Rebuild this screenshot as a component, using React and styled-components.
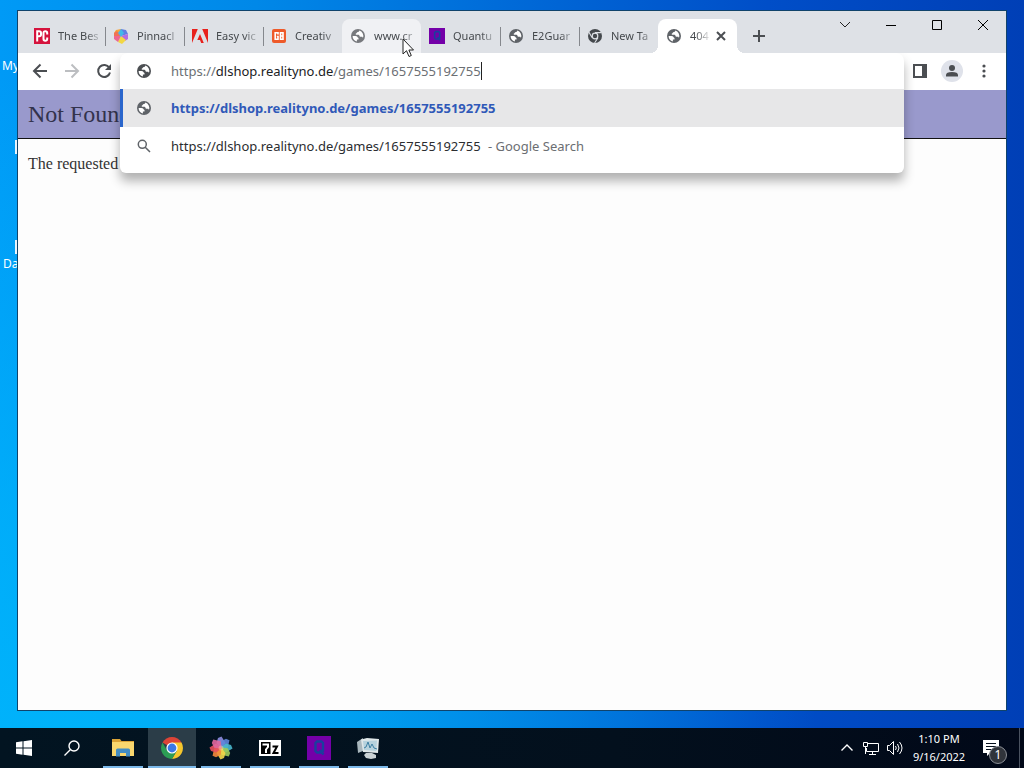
import React from "react";
import styled, { createGlobalStyle, css } from "styled-components";

const ui = `"Segoe UI", "Noto Sans", "Open Sans", sans-serif`;

const GlobalStyle = createGlobalStyle`
  * { box-sizing: border-box; }
  body { margin: 0; font-family: ${ui}; overflow: hidden; }
  button { border: 0; padding: 0; background: none; font: inherit; color: inherit; cursor: default; }
`;

const Screen = styled.div`
  position: relative;
  display: flex;
  flex-direction: column;
  height: 100vh;
  background:
    radial-gradient(ellipse 75% 90% at 5% 100%, rgba(0, 186, 252, 0.8) 0%, rgba(0, 186, 252, 0.6) 35%, rgba(0, 186, 252, 0) 100%),
    linear-gradient(90deg, #009af6 0%, #0088e8 25%, #006ad8 50%, #004ec8 75%, #003fb6 100%);
`;

const Desktop = styled.main`
  position: relative;
  flex: 1;
  min-height: 0;
  display: flex;
  padding: 10px 17px 17px;
`;

const Shortcut = styled.div`
  position: absolute;
  left: ${(p) => p.$left}px;
  top: ${(p) => p.$top}px;
  width: 30px;
  display: flex;
  flex-direction: column;
  gap: 2px;
  color: #fff;
  font-size: 12px;
  line-height: 16px;
`;

const ShortcutIcon = styled.span`
  width: 20px;
  height: 14px;
  margin-left: 12px;
  background: ${(p) => (p.$blank ? "transparent" : "#e8f4fc")};
`;

const BrowserWindow = styled.section`
  position: relative;
  flex: 1;
  min-width: 0;
  display: flex;
  flex-direction: column;
  border: 1px solid #10436b;
  background: #fdfdfd;
`;

const TitleBar = styled.header`
  display: flex;
  justify-content: space-between;
  height: 42px;
  background: #dee1e6;
`;

const TabStrip = styled.div`
  display: flex;
  align-items: flex-end;
  padding-left: 8px;
`;

const Tab = styled.div`
  position: relative;
  display: flex;
  align-items: center;
  gap: 8px;
  width: 79px;
  height: 34px;
  padding: 0 5px 0 8px;
  color: #45494d;
  font-size: 11px;
  ${(p) => p.$divider && css`
    &::after {
      content: "";
      position: absolute;
      right: -1px;
      top: 8px;
      width: 1px;
      height: 19px;
      background: #85888d;
    }
  `}
  ${(p) => p.$hovered && css`
    background: #f0f1f4;
    border-radius: 8px 8px 0 0;
  `}
  ${(p) => p.$active && css`
    gap: 4px;
    padding-right: 8px;
    background: #fff;
    border-radius: 8px 8px 0 0;
    & > svg { margin-right: 4px; }
    &::before, &::after {
      content: "";
      position: absolute;
      bottom: 0;
      width: 8px;
      height: 8px;
    }
    &::before { left: -8px; background: radial-gradient(circle at 0 0, transparent 8px, #fff 8px); }
    &::after { right: -8px; background: radial-gradient(circle at 100% 0, transparent 8px, #fff 8px); }
  `}
`;

const TabTitle = styled.span`
  flex: 1;
  min-width: 0;
  overflow: hidden;
  white-space: nowrap;
  line-height: 18px;
  mask-image: linear-gradient(90deg, #000 calc(100% - 14px), rgba(0, 0, 0, 0.15));
`;

const IconButton = styled.button`
  display: flex;
  flex: none;
  align-items: center;
  justify-content: center;
  width: ${(p) => p.$w || 32}px;
  height: ${(p) => p.$h || 32}px;
  color: ${(p) => p.$color || "#4b4e52"};
`;

const NewTab = styled(IconButton)`
  margin: 0 0 1px 6px;
`;

const WindowControls = styled.div`
  display: flex;
  color: #111;
`;

const Toolbar = styled.div`
  display: flex;
  align-items: center;
  height: 37px;
  padding: 0 6px 1px;
  background: #fff;
`;

const Omnibox = styled.div`
  position: relative;
  flex: 1;
  align-self: stretch;
`;

const Popup = styled.div`
  position: absolute;
  z-index: 2;
  top: 0;
  left: 0;
  right: 0;
  padding-bottom: 8px;
  background: #fff;
  border-radius: 8px 8px 6px 6px;
  box-shadow: 0 8px 11px rgba(0, 0, 0, 0.3);
  clip-path: inset(0 -24px -30px -24px);
`;

const AddressRow = styled.form`
  display: flex;
  align-items: center;
  gap: 19px;
  height: 36px;
  margin: 0;
  padding-left: 16px;
`;

const Field = styled.label`
  position: relative;
  display: flex;
  align-items: center;
  flex: 1;
  height: 24px;
`;

const AddressInput = styled.input`
  position: absolute;
  inset: 0;
  width: 100%;
  padding: 0;
  border: 0;
  outline: 0;
  background: transparent;
  font: 13px/24px ${ui};
  color: #6b6f73;
`;

const Host = styled.span`
  position: relative;
  font-size: 13px;
  line-height: 24px;
  color: #6b6f73;
  background: #fff;
  pointer-events: none;
  b { font-weight: 400; color: #202124; }
`;

const Caret = styled.span`
  position: relative;
  width: 1px;
  height: 18px;
  background: #222;
`;

const Suggestions = styled.ul`
  list-style: none;
  margin: 0;
  padding: 0;
`;

const Suggestion = styled.li`
  display: flex;
  align-items: center;
  gap: 19px;
  height: 38px;
  padding-left: ${(p) => (p.$selected ? 13 : 16)}px;
  border-left: ${(p) => (p.$selected ? "3px solid #2a66cc" : "0")};
  background: ${(p) => (p.$selected ? "#e7e7e8" : "transparent")};
  color: ${(p) => (p.$selected ? "#3059b8" : "#2b2d30")};
  font-size: 13px;
  font-weight: ${(p) => (p.$selected ? 700 : 400)};
  line-height: 20px;
  small { margin-left: 4px; font-size: 13px; color: #6b6e72; }
`;

const Page = styled.article`
  flex: 1;
  overflow: hidden;
  font-family: "Liberation Serif", serif;
  color: #333;
  h1 {
    margin: 0;
    padding: 10px;
    height: 49px;
    font-size: 24px;
    font-weight: 400;
    line-height: 28px;
    color: #33334c;
    background: #9999cc;
    border-bottom: 1px solid #111;
  }
  p {
    margin: 0;
    padding: 16px 10px;
    font-size: 16px;
    line-height: 18px;
  }
`;

const Avatar = styled(IconButton)`
  margin: 0 5px;
  svg { background: #dfe2ea; border-radius: 50%; }
`;

const Pointer = styled.svg`
  position: absolute;
  z-index: 5;
  left: 402px;
  top: 38px;
`;

const Taskbar = styled.footer`
  display: flex;
  justify-content: space-between;
  height: 40px;
  background: linear-gradient(90deg, #021421, #03101d 60%, #010818);
`;

const Group = styled.div`
  display: flex;
  align-items: center;
`;

const Apps = styled.nav`
  display: flex;
  gap: 1px;
  margin-left: 3px;
`;

const TaskButton = styled.button`
  display: flex;
  align-items: center;
  justify-content: center;
  width: 48px;
  height: 40px;
  background: ${(p) => (p.$active ? "#2b3d48" : "transparent")};
  background-image: ${(p) => (p.$running || p.$active ? "linear-gradient(#7cb9ea, #7cb9ea)" : "none")};
  background-repeat: no-repeat;
  background-position: bottom center;
  background-size: ${(p) => (p.$active ? 48 : 40)}px 2px;
`;

const Clock = styled.time`
  width: 56px;
  margin: 0 4px;
  text-align: center;
  color: #fff;
  font-size: 11px;
  line-height: 18px;
  white-space: nowrap;
`;

const Notifications = styled.button`
  position: relative;
  width: 48px;
  height: 40px;
  padding: 0 0 0 12px;
  svg { display: block; }
`;

const Badge = styled.span`
  position: absolute;
  right: 12px;
  bottom: 4px;
  width: 18px;
  height: 18px;
  border: 1px solid #8b8f96;
  border-radius: 50%;
  background: #30343b;
  color: #fff;
  font-size: 12px;
  line-height: 16px;
  text-align: center;
`;

const ShowDesktop = styled.button`
  width: 5px;
  height: 40px;
  border-left: 1px solid #4a5260;
`;

const Globe = ({ color = "#5f6368" }) => (
  <svg width="16" height="16" viewBox="0 0 16 16">
    <circle cx="8" cy="8" r="7" fill={color} />
    <path d="M2.600 8.100h2.900c2 0 1.700 1.700 3 1.800v1.600H6.900v2A5.700 5.700 0 0 1 2.600 8.100z" fill="#fff" />
    <path d="M9.200 2.500c0 1.500-.8 1.600-2 1.700-.6.100-.2 1.200-1.400 1.300v1.300h2.600c1.300.1.800 1.900 2 2h1.300c.7 0 1 .5 1.200 1.300A5.700 5.700 0 0 0 9.200 2.500z" fill="#fff" />
  </svg>
);

const PcMag = () => (
  <svg width="16" height="16" viewBox="0 0 16 16">
    <path fill="#d5133d" d="M0 0h16v16H0z" />
    <path d="M3.200 13.500V3.200h2q1.800 0 1.800 1.800v1.500q0 1.800-1.800 1.800H3.500M13.200 6.500V5q0-1.800-1.900-1.800T9.500 5v6q0 1.800 1.800 1.800t1.900-1.800V9.500" fill="none" stroke="#fff" strokeWidth="2" />
  </svg>
);

const petals = ["#8f8de0", "#5f86dc", "#49b7cc", "#9ccb5a", "#f3d84a", "#f58a3b", "#e9505e", "#e0679f"];
const Pinnacle = ({ size = 16 }) => (
  <svg width={size} height={size} viewBox="0 0 24 24">
    {petals.map((c, i) => (
      <path key={c} d="M12 13 7.500 7 9 2l3.500-1.500L16.500 7z" fill={c} opacity=".9" transform={`rotate(${i * 45} 12 12)`} />
    ))}
    <circle cx="12" cy="12" r="2.500" fill="#ffd9a0" opacity=".4" />
  </svg>
);

const PinnacleHex = () => (
  <svg width="16" height="16" viewBox="0 0 16 16">
    <path d="M8 8 1 5l2-3 5-1z" fill="#f7a338" />
    <path d="M8 8V1l5 1 2 4z" fill="#5f7fe3" />
    <path d="M8 8l7-2v5l-3 2z" fill="#b56de2" />
    <path d="M8 8l5 4-4 4-4-2z" fill="#f2d743" />
    <path d="M8 8l-3 6-4-3V8z" fill="#ed6690" />
    <path d="M8 8H1V5l3-2z" fill="#ef7353" />
    <path d="M8 9 5 5l3-4 3 4z" fill="#43b8e9" />
  </svg>
);

const Adobe = () => (
  <svg width="16" height="16" viewBox="0 0 16 16">
    <path d="M0 1h5.800L0 15zM10.200 1H16v14zM8 6l3.800 9H9.200L8 12H5.300z" fill="#e8211c" />
  </svg>
);

const CreativeBloq = () => (
  <svg width="16" height="16" viewBox="0 0 16 16">
    <rect x="1" y="1" width="14" height="14" rx="2" fill="#ee5a2a" />
    <path d="M7 6.500V4.800H4.200v6.400H7V8.500H5.800M9.500 12V4.800h2.500v6.400H9.500M9.500 8H12" fill="none" stroke="#fff" strokeWidth="1.600" />
  </svg>
);

const Quantum = ({ size = 16 }) => (
  <svg width={size} height={size} viewBox="0 0 24 24">
    <path fill="#7400a8" d="M0 0h24v24H0z" />
    <path d="M10 5.500h4.500L16 7v8l-1.500 1.500H10L8.500 15V7zM13 14l3.500 4.500" fill="none" stroke="#1a3f9e" strokeWidth="2.400" />
  </svg>
);

const ChromeMono = () => (
  <svg width="16" height="16" viewBox="0 0 16 16">
    <circle cx="8" cy="8" r="7" fill="#45494d" />
    <circle cx="8" cy="8" r="3.400" fill="#dee1e6" />
    <circle cx="8" cy="8" r="2.200" fill="#45494d" />
    <path d="M8 4.600h6.200M5 9.600 2 4.200M10.900 9.800 7.600 15" stroke="#dee1e6" strokeWidth="1.100" />
  </svg>
);

const Chrome = () => (
  <svg width="24" height="24" viewBox="0 0 24 24">
    <path d="M12 12 2.500 6.500A11 11 0 0 1 21.500 6.500z" fill="#dc4437" />
    <path d="M12 12V6.500h9.500A11 11 0 0 1 12 23l4.800-8.200z" fill="#f6c62d" />
    <path d="M12 12 7.200 14.800 2.500 6.500A11 11 0 0 0 12 23l4.800-8.200z" fill="#2c9d54" />
    <circle cx="12" cy="12" r="5.600" fill="#fff" />
    <circle cx="12" cy="12" r="4.400" fill="#3b78e7" />
  </svg>
);

const Explorer = () => (
  <svg width="24" height="24" viewBox="0 0 24 24">
    <path d="M1 3h8l1.500 2H23v5H1z" fill="#dba336" />
    <path d="M1 6h22v14H1z" fill="#f9d76e" />
    <path d="M5 20.500V14q0-1.500 1.500-1.500h11q1.500 0 1.500 1.500v6.500h-4V17H9v3.500z" fill="#438dc3" />
  </svg>
);

const SevenZip = () => (
  <svg width="22" height="18" viewBox="0 0 22 18">
    <path fill="#fff" d="M0 1h22v16H0z" />
    <path fill="#000" d="M2 3h9.500v12H2z" />
    <path d="M3.500 5.500h5.500V8L7 10.500V14" fill="none" stroke="#fff" strokeWidth="2" />
    <path d="M13.500 7.500h4.500L14.500 14h5" fill="none" stroke="#000" strokeWidth="2" />
  </svg>
);

const Monitor = () => (
  <svg width="26" height="24" viewBox="0 0 26 24">
    <path d="M2 6 8 2v13l-5 2z" fill="#a9b7bd" />
    <path d="M6 3.500 12 2l12 1-1 14-15-1z" fill="#dfe7e9" />
    <path d="m8 5 14-.5-.7 10.500L9 14z" fill="#b7d2dd" />
    <path d="m9 12 2-1 2-5 2 6 2-4 2 4 3 1" fill="none" stroke="#3d7fa3" />
    <path d="M11 17h6l4 2v3l-5 1-5-1-2-3z" fill="#cbd3d6" />
  </svg>
);

const tabs = [
  { title: "The Bes", icon: <PcMag />, divider: true },
  { title: "Pinnacl", icon: <PinnacleHex />, divider: true },
  { title: "Easy vic", icon: <Adobe />, divider: true },
  { title: "Creativ", icon: <CreativeBloq /> },
  { title: "www.cr", icon: <Globe color="#77797d" />, hovered: true },
  { title: "Quantu", icon: <Quantum />, divider: true },
  { title: "E2Guar", icon: <Globe />, divider: true },
  { title: "New Ta", icon: <ChromeMono /> },
  { title: "404", icon: <Globe />, active: true },
];

const apps = [
  { name: "File Explorer", icon: <Explorer /> },
  { name: "Google Chrome", icon: <Chrome />, active: true },
  { name: "Pinnacle", icon: <Pinnacle size={24} /> },
  { name: "7-Zip", icon: <SevenZip /> },
  { name: "Quantum", icon: <Quantum size={24} /> },
  { name: "Monitor", icon: <Monitor /> },
];

const url = "https://dlshop.realityno.de/games/1657555192755";

const Stroke = ({ d, size = 16, w = 1, ...rest }) => (
  <svg width={size} height={size} viewBox={`0 0 ${size} ${size}`} fill="none" stroke="currentColor" strokeWidth={w} {...rest}>
    <path d={d} />
  </svg>
);

export default function App() {
  const [address, setAddress] = React.useState(url);
  return (
    <Screen>
      <GlobalStyle />
      <Desktop>
        <Shortcut $left={2} $top={42}><ShortcutIcon $blank />My</Shortcut>
        <Shortcut $left={3} $top={140}><ShortcutIcon /></Shortcut>
        <Shortcut $left={3} $top={240}><ShortcutIcon />Da</Shortcut>
        <BrowserWindow>
          <TitleBar>
            <TabStrip>
              {tabs.map((t) => (
                <Tab key={t.title} $divider={t.divider} $hovered={t.hovered} $active={t.active}>
                  {t.icon}
                  <TabTitle>{t.title}</TabTitle>
                  {t.active && (
                    <IconButton $w={16} $h={16} aria-label="Close tab">
                      <Stroke w={2} d="m4 4 8 8m0-8-8 8" />
                    </IconButton>
                  )}
                </Tab>
              ))}
              <NewTab aria-label="New tab"><Stroke w={2} d="M8 2v12M2 8h12" /></NewTab>
            </TabStrip>
            <WindowControls>
              <IconButton $w={46} $h={28} $color="#222" aria-label="Search tabs"><Stroke d="m3 5 5 5 5-5" /></IconButton>
              <IconButton $w={46} $h={28} $color="#000" aria-label="Minimize"><Stroke d="M3 8.500h10" /></IconButton>
              <IconButton $w={46} $h={28} $color="#000" aria-label="Maximize"><Stroke d="M3.500 3.500h9v9h-9z" /></IconButton>
              <IconButton $w={46} $h={28} $color="#000" aria-label="Close"><Stroke d="m3 3 10 10m0-10L3 13" /></IconButton>
            </WindowControls>
          </TitleBar>
          <Toolbar>
            <IconButton aria-label="Back"><Stroke w={2} d="M15 8H2m6.500-6.500L2 8l6.500 6.500" /></IconButton>
            <IconButton $color="#bcbec1" aria-label="Forward"><Stroke w={2} d="M1 8h13M7.500 1.500 14 8l-6.500 6.500" /></IconButton>
            <IconButton aria-label="Reload">
              <svg width="16" height="16" viewBox="0 0 16 16">
                <path d="M13.300 4.800A6 6 0 1 0 14 9.500" fill="none" stroke="currentColor" strokeWidth="2" />
                <path d="M15 1v6H9z" fill="currentColor" />
              </svg>
            </IconButton>
            <Omnibox>
              <Popup>
                <AddressRow onSubmit={(e) => e.preventDefault()}>
                  <Globe color="#4b4e52" />
                  <Field>
                    <AddressInput aria-label="Address" value={address} onChange={(e) => setAddress(e.target.value)} />
                    {address === url && (
                      <>
                        <Host aria-hidden="true">https://<b>dlshop.realityno.de</b>/games/1657555192755</Host>
                        <Caret />
                      </>
                    )}
                  </Field>
                </AddressRow>
                <Suggestions>
                  <Suggestion $selected><Globe />{url}</Suggestion>
                  <Suggestion>
                    <Stroke w={1.5} d="m9 9 5 5M10.300 6.300a4 4 0 1 1-8 0 4 4 0 0 1 8 0z" color="#5f6368" />
                    <span>{url} <small>- Google Search</small></span>
                  </Suggestion>
                </Suggestions>
              </Popup>
            </Omnibox>
            <IconButton aria-label="Side panel">
              <svg width="16" height="16" viewBox="0 0 16 16">
                <path d="M1 1h14v14H1zm2 2v10h7V3z" fill="#4b4e52" fillRule="evenodd" />
              </svg>
            </IconButton>
            <Avatar $w={22} aria-label="Profile">
              <svg width="22" height="22" viewBox="0 0 22 22">
                <circle cx="11" cy="8" r="3" fill="#4b4e52" />
                <path d="M5 16.500v-1.500q0-3 6-3t6 3v1.500z" fill="#4b4e52" />
              </svg>
            </Avatar>
            <IconButton aria-label="Menu">
              <svg width="16" height="16" viewBox="0 0 16 16" fill="#4b4e52">
                <circle cx="8" cy="3" r="1.600" /><circle cx="8" cy="8" r="1.600" /><circle cx="8" cy="13" r="1.600" />
              </svg>
            </IconButton>
          </Toolbar>
          <Page>
            <h1>Not Found</h1>
            <p>The requested</p>
          </Page>
        </BrowserWindow>
      </Desktop>
      <Taskbar>
        <Group>
          <TaskButton aria-label="Start">
            <svg width="16" height="16" viewBox="0 0 16 16" fill="#fff">
              <path d="M0 2.200 6.500 1.300v6.200H0zM7.500 1.200 16 0v7.500H7.500zM0 8.500h6.500v6.200L0 13.800zM7.500 8.500H16V16l-8.500-1.200z" />
            </svg>
          </TaskButton>
          <TaskButton aria-label="Search">
            <Stroke color="#fff" w={1.4} d="M6.500 9.500.5 15.500M15 6a5 5 0 1 1-10 0 5 5 0 0 1 10 0z" />
          </TaskButton>
          <Apps>
            {apps.map((a) => (
              <TaskButton key={a.name} aria-label={a.name} $running $active={a.active}>{a.icon}</TaskButton>
            ))}
          </Apps>
        </Group>
        <Group>
          <IconButton $w={24} $color="#fff" aria-label="Show hidden icons"><Stroke w={1.4} d="m2.500 10.500 5.500-5.500 5.500 5.500" /></IconButton>
          <IconButton $w={24} $color="#fff" aria-label="Network"><Stroke d="M5 3.500h10.500v8H3.500V8M.5 2.500h4v4h-4zM2.500 6v8M9.500 11.500v3M6 14.500h7" /></IconButton>
          <IconButton $w={24} $color="#fff" aria-label="Volume"><Stroke d="M.5 5.500h2l4-4v13l-4-4h-2zM8.500 6q1.500 2 0 4M10.500 4q3 4 0 8M12.500 2q5 6 0 12" /></IconButton>
          <Clock>1:10 PM<br />9/16/2022</Clock>
          <Notifications aria-label="Notifications">
            <svg width="16" height="16" viewBox="0 0 16 16">
              <path d="M0 0h16v13H7l-3 3v-3H0z" fill="#fff" />
              <path d="M3 3.500h10M3 6.500h10M3 9.500h7" stroke="#06101d" />
            </svg>
            <Badge>1</Badge>
          </Notifications>
          <ShowDesktop aria-label="Show desktop" />
        </Group>
      </Taskbar>
      <Pointer width="12" height="20" viewBox="0 0 12 20" aria-hidden="true">
        <path d="M1 1v15l3.500-3.300L7 18.500l2.300-1L6.900 12H11.500z" fill="#fff" stroke="#222" />
      </Pointer>
    </Screen>
  );
}
